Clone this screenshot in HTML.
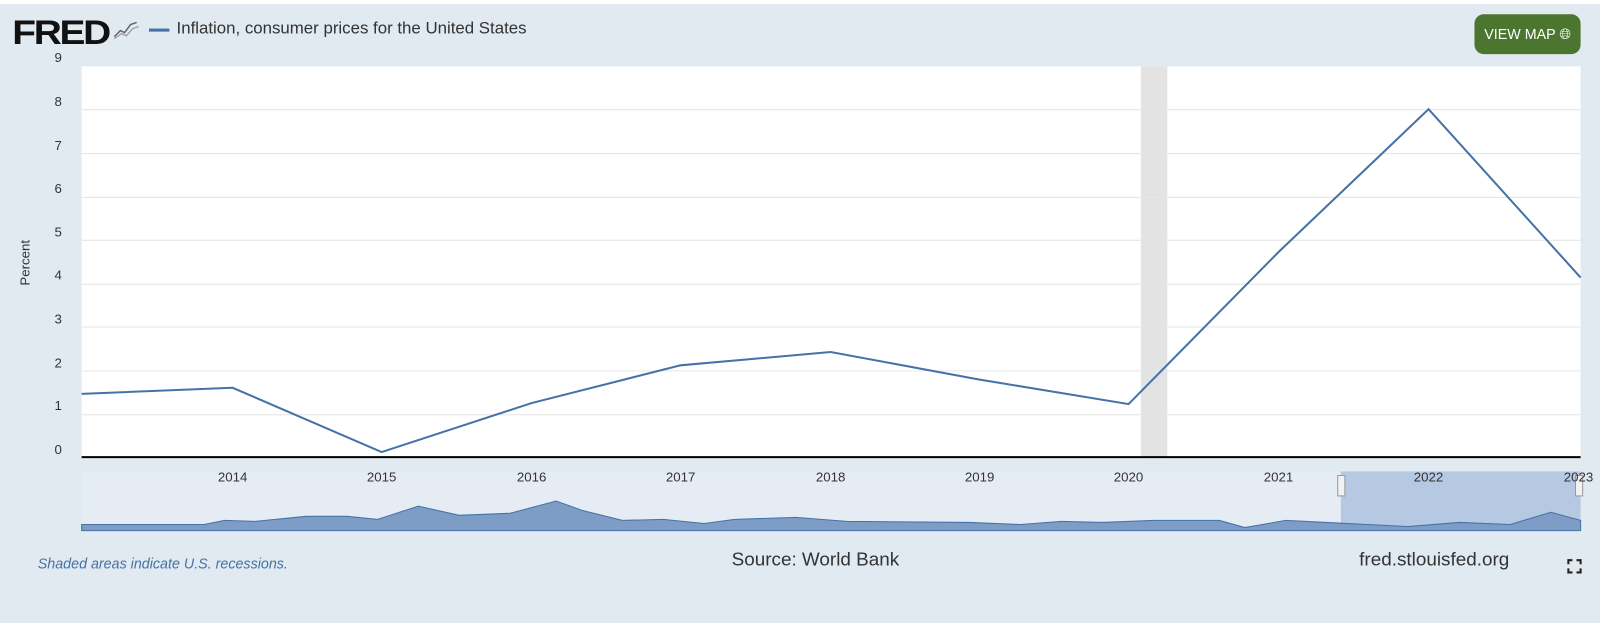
<!DOCTYPE html>
<html><head><style>
body{margin:0;width:1600px;height:623px;background:#e1e9f1;font-family:"Liberation Sans",sans-serif;position:relative;overflow:hidden}
#w{position:absolute;left:0;top:0;width:1568px;height:611px;transform:scale(1.0204);transform-origin:0 0}
.a{position:absolute}
.yl{position:absolute;left:50px;width:14px;text-align:center;font-size:13px;color:#333}
.xl{position:absolute;top:460px;font-size:13px;color:#333;width:40px;text-align:center}
</style></head><body><div id="w">
<div class="a" style="left:0;top:0;width:1568px;height:4px;background:#fff"></div>
<div class="a" style="left:12px;top:13px;font-weight:bold;font-size:34px;letter-spacing:-2px;color:#111;transform:scaleX(1.12);transform-origin:0 0">FRED</div>
<svg class="a" style="left:110px;top:18px" width="28" height="22"><path d="M2 18 L8 12 L12 14 L18 6 L24 4" stroke="#666" fill="none" stroke-width="1.5"/><path d="M2 20 L9 15 L14 17 L20 10 L26 8" stroke="#999" fill="none" stroke-width="1.2"/></svg>
<div class="a" style="left:146px;top:28px;width:20px;height:3px;background:#4572a7"></div>
<div class="a" style="left:173px;top:19px;font-size:16.5px;color:#333">Inflation, consumer prices for the United States</div>
<div class="a" style="left:1445px;top:14px;width:104px;height:39px;background:#4c7630;border-radius:9px;color:#fff;font-size:14px;line-height:39px;text-align:center">VIEW MAP &#x1F310;&#xFE0E;</div>
<div class="a" style="left:80px;top:65px;width:1469px;height:383px;background:#fff"></div>
<div class="a" style="left:1118px;top:65px;width:26px;height:383px;background:#e3e3e3"></div>
<div class="yl" style="top:49px">9</div><div class="yl" style="top:92px">8</div><div class="yl" style="top:135px">7</div><div class="yl" style="top:177px">6</div><div class="yl" style="top:220px">5</div><div class="yl" style="top:262px">4</div><div class="yl" style="top:305px">3</div><div class="yl" style="top:348px">2</div><div class="yl" style="top:390px">1</div><div class="yl" style="top:433px">0</div>
<div class="a" style="left:2px;top:250px;transform:rotate(-90deg);font-size:13px;color:#333">Percent</div>
<svg class="a" style="left:0;top:0" width="1568" height="611">
<g stroke="#e6e6e6" stroke-width="1"><line x1="80" x2="1549" y1="107.5" y2="107.5"/><line x1="80" x2="1549" y1="150.5" y2="150.5"/><line x1="80" x2="1549" y1="193.5" y2="193.5"/><line x1="80" x2="1549" y1="235.5" y2="235.5"/><line x1="80" x2="1549" y1="278.5" y2="278.5"/><line x1="80" x2="1549" y1="320.5" y2="320.5"/><line x1="80" x2="1549" y1="363.5" y2="363.5"/><line x1="80" x2="1549" y1="406.5" y2="406.5"/></g>
<line x1="80" x2="1549" y1="448" y2="448" stroke="#000" stroke-width="2"/>
<polyline fill="none" stroke="#4572a7" stroke-width="2" points="80,386 228,380 374,443 521,395 667,358 814,345 960,372 1106,396 1253,247 1400,107 1549,272"/>
<rect x="80" y="462" width="1469" height="58" fill="#e6ecf3"/>
<rect x="1314" y="462" width="235" height="58" fill="#b6c9e3"/>
<path d="M80 514 L200 514 L220 510 L250 511 L300 506 L340 506 L370 509 L410 496 L450 505 L500 503 L545 491 L570 500 L610 510 L650 509 L690 513 L720 509 L780 507 L830 511 L950 512 L1000 514 L1040 511 L1080 512 L1130 510 L1195 510 L1220 517 L1260 510 L1300 512 L1340 514 L1380 516 L1430 512 L1480 514 L1520 502 L1549 510 L1549 520 L80 520 Z" fill="#7d9cc6" stroke="#4572a7" stroke-width="1"/>
<rect x="1311" y="466" width="7" height="20" fill="#f2f2f2" stroke="#999"/>
<rect x="1544" y="466" width="7" height="20" fill="#f2f2f2" stroke="#999"/>
<path d="M1537 553v-4h4M1545 549h4v4M1549 557v4h-4M1541 561h-4v-4" stroke="#222" stroke-width="2" fill="none"/>
</svg>
<div class="xl" style="left:208px">2014</div><div class="xl" style="left:354px">2015</div><div class="xl" style="left:501px">2016</div><div class="xl" style="left:647px">2017</div><div class="xl" style="left:794px">2018</div><div class="xl" style="left:940px">2019</div><div class="xl" style="left:1086px">2020</div><div class="xl" style="left:1233px">2021</div><div class="xl" style="left:1380px">2022</div><div class="xl" style="left:1527px">2023</div>
<div class="a" style="left:37px;top:544px;font-size:14px;font-style:italic;color:#4572a7">Shaded areas indicate U.S. recessions.</div>
<div class="a" style="left:717px;top:537px;font-size:18.5px;color:#333">Source: World Bank</div>
<div class="a" style="left:1332px;top:537px;font-size:18.5px;color:#333">fred.stlouisfed.org</div>
</div></body></html>
